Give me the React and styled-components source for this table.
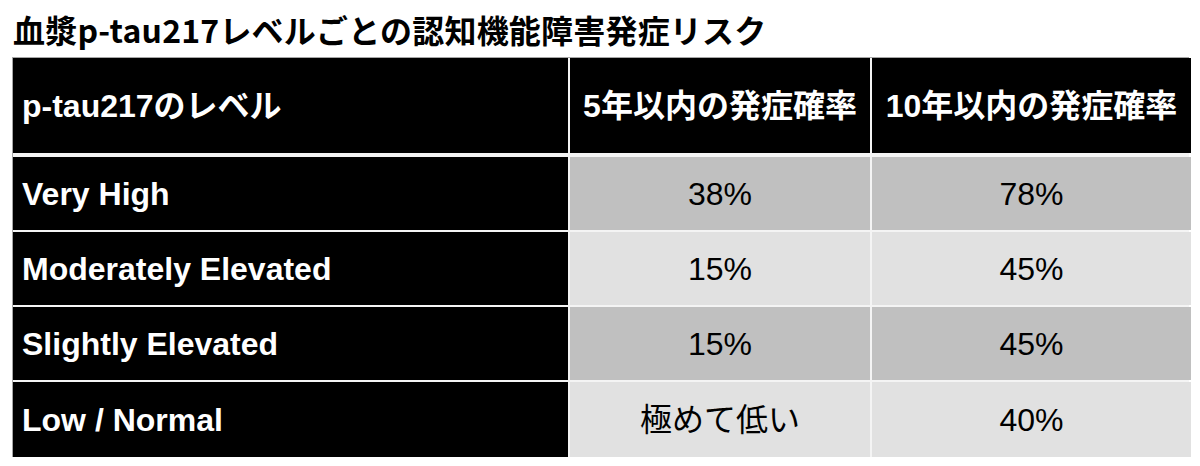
import React from "react";
import styled, { createGlobalStyle } from "styled-components";

const Global = createGlobalStyle`
  html, body { margin: 0; padding: 0; background: #fff; }
  body { font-family: "Liberation Sans", "Noto Sans CJK JP", sans-serif; }
`;

const Page = styled.div`
  width: 1200px;
  height: 466px;
  padding: 0 0 0 12px;
  box-sizing: border-box;
  overflow: hidden;
`;

const Title = styled.h1`
  margin: 0;
  padding: 9px 0 0 1px;
  height: 57px;
  box-sizing: border-box;
  font-family: "Noto Sans CJK JP", sans-serif;
  font-weight: 700;
  font-size: 32px;
  line-height: 40px;
  color: #000;
  letter-spacing: 0.2px;
`;

const Table = styled.div`
  width: 1176px;
  border: 1px solid #a6a6a6;
  border-right: none;
  border-bottom: none;
  display: flex;
  flex-direction: column;
  gap: 4px;
  background: #f4f4f4;
`;

const Body = styled.div`
  display: flex;
  flex-direction: column;
  gap: 2px;
`;

const Row = styled.div`
  display: grid;
  grid-template-columns: 555px 300px 319px;
  column-gap: 2px;
  height: ${(p) => p.$h}px;
`;

const Cell = styled.div`
  display: flex;
  align-items: center;
  justify-content: ${(p) => (p.$center ? "center" : "flex-start")};
  padding: ${(p) => (p.$center ? "0" : "0 0 0 9px")};
  background: ${(p) => p.$bg};
  color: ${(p) => (p.$dark ? "#fff" : "#000")};
  font-weight: ${(p) => (p.$bold ? 700 : 400)};
  font-size: 32px;
  line-height: 1;
  white-space: nowrap;
  font-family: "Liberation Sans", "Noto Sans CJK JP", sans-serif;
`;

const rows = [
  { label: "Very High", a: "38%", b: "78%", bg: "#c0c0c0" },
  { label: "Moderately Elevated", a: "15%", b: "45%", bg: "#e1e1e1" },
  { label: "Slightly Elevated", a: "15%", b: "45%", bg: "#c0c0c0" },
  { label: "Low / Normal", a: "極めて低い", b: "40%", bg: "#e1e1e1" },
];

export default function App() {
  return (
    <>
      <Global />
      <Page>
        <Title>血漿p-tau217レベルごとの認知機能障害発症リスク</Title>
        <Table>
          <Row $h={95}>
            <Cell $bg="#000" $dark $bold>p-tau217のレベル</Cell>
            <Cell $bg="#000" $dark $bold $center>5年以内の発症確率</Cell>
            <Cell $bg="#000" $dark $bold $center>10年以内の発症確率</Cell>
          </Row>
          <Body>
            {rows.map((r, i) => (
              <Row key={r.label} $h={i === 3 ? 75 : 73}>
                <Cell $bg="#000" $dark $bold>{r.label}</Cell>
                <Cell $bg={r.bg} $center>{r.a}</Cell>
                <Cell $bg={r.bg} $center>{r.b}</Cell>
              </Row>
            ))}
          </Body>
        </Table>
      </Page>
    </>
  );
}
